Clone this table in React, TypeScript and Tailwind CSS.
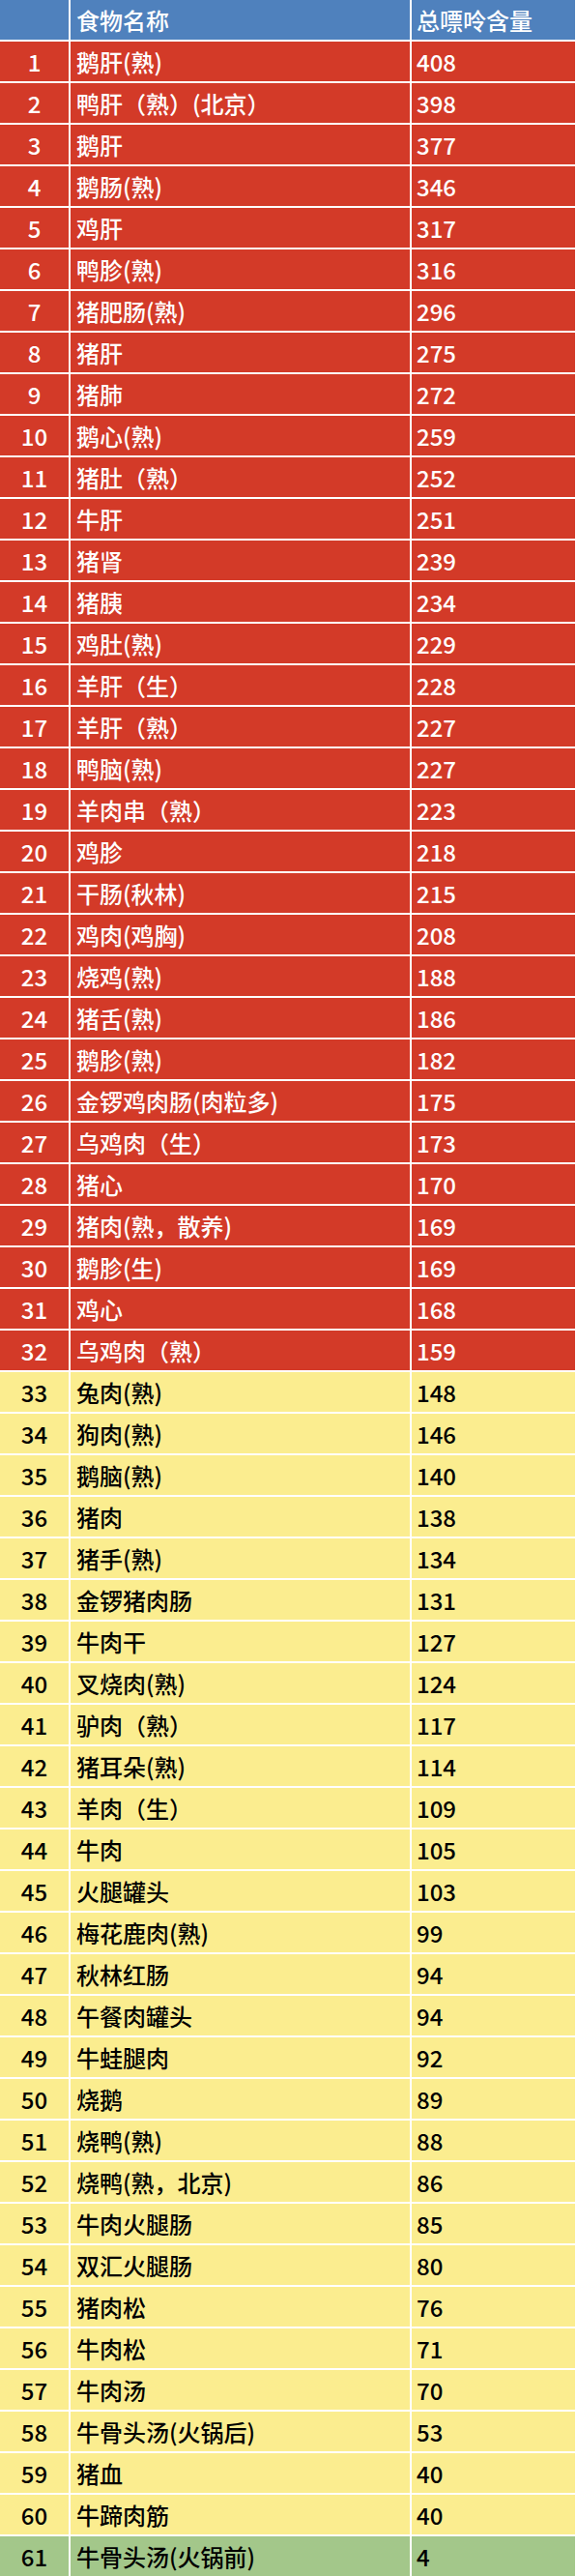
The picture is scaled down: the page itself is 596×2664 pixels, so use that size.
import React from "react";

const rows: [string, string][] = [
  ["鹅肝(熟)", "408"],
  ["鸭肝（熟）(北京）", "398"],
  ["鹅肝", "377"],
  ["鹅肠(熟)", "346"],
  ["鸡肝", "317"],
  ["鸭胗(熟)", "316"],
  ["猪肥肠(熟)", "296"],
  ["猪肝", "275"],
  ["猪肺", "272"],
  ["鹅心(熟)", "259"],
  ["猪肚（熟）", "252"],
  ["牛肝", "251"],
  ["猪肾", "239"],
  ["猪胰", "234"],
  ["鸡肚(熟)", "229"],
  ["羊肝（生）", "228"],
  ["羊肝（熟）", "227"],
  ["鸭脑(熟)", "227"],
  ["羊肉串（熟）", "223"],
  ["鸡胗", "218"],
  ["干肠(秋林)", "215"],
  ["鸡肉(鸡胸)", "208"],
  ["烧鸡(熟)", "188"],
  ["猪舌(熟)", "186"],
  ["鹅胗(熟)", "182"],
  ["金锣鸡肉肠(肉粒多)", "175"],
  ["乌鸡肉（生）", "173"],
  ["猪心", "170"],
  ["猪肉(熟，散养)", "169"],
  ["鹅胗(生)", "169"],
  ["鸡心", "168"],
  ["乌鸡肉（熟）", "159"],
  ["兔肉(熟)", "148"],
  ["狗肉(熟)", "146"],
  ["鹅脑(熟)", "140"],
  ["猪肉", "138"],
  ["猪手(熟)", "134"],
  ["金锣猪肉肠", "131"],
  ["牛肉干", "127"],
  ["叉烧肉(熟)", "124"],
  ["驴肉（熟）", "117"],
  ["猪耳朵(熟)", "114"],
  ["羊肉（生）", "109"],
  ["牛肉", "105"],
  ["火腿罐头", "103"],
  ["梅花鹿肉(熟)", "99"],
  ["秋林红肠", "94"],
  ["午餐肉罐头", "94"],
  ["牛蛙腿肉", "92"],
  ["烧鹅", "89"],
  ["烧鸭(熟)", "88"],
  ["烧鸭(熟，北京)", "86"],
  ["牛肉火腿肠", "85"],
  ["双汇火腿肠", "80"],
  ["猪肉松", "76"],
  ["牛肉松", "71"],
  ["牛肉汤", "70"],
  ["牛骨头汤(火锅后)", "53"],
  ["猪血", "40"],
  ["牛蹄肉筋", "40"],
  ["牛骨头汤(火锅前)", "4"],
];

function rowClass(i: number): string {
  if (i < 32) return "bg-[#d33a28] text-white";
  if (i < 60) return "bg-[#fbed8f] text-black";
  return "bg-[#a3c78a] text-black";
}

export default function App() {
  return (
    <div
      className="w-[596px] bg-white pr-[1px]"
      style={{ fontFamily: '"Noto Sans CJK SC", "Noto Sans", sans-serif' }}
    >
      <div className="grid grid-cols-[71px_351px_1fr] gap-[2px] text-[24px] leading-none font-medium">
        <div className="h-[41px] bg-[#4f81bd]" />
        <div className="h-[41px] bg-[#4f81bd] text-white flex items-center pl-[6px]">食物名称</div>
        <div className="h-[41px] bg-[#4f81bd] text-white flex items-center pl-[5px]">总嘌呤含量</div>
        {rows.map(([name, val], i) => (
          <React.Fragment key={i}>
            <div className={`h-[41px] flex items-center justify-center ${rowClass(i)}`}>{i + 1}</div>
            <div className={`h-[41px] flex items-center pl-[6px] ${rowClass(i)}`}>{name}</div>
            <div className={`h-[41px] flex items-center pl-[5px] ${rowClass(i)}`}>{val}</div>
          </React.Fragment>
        ))}
      </div>
    </div>
  );
}
